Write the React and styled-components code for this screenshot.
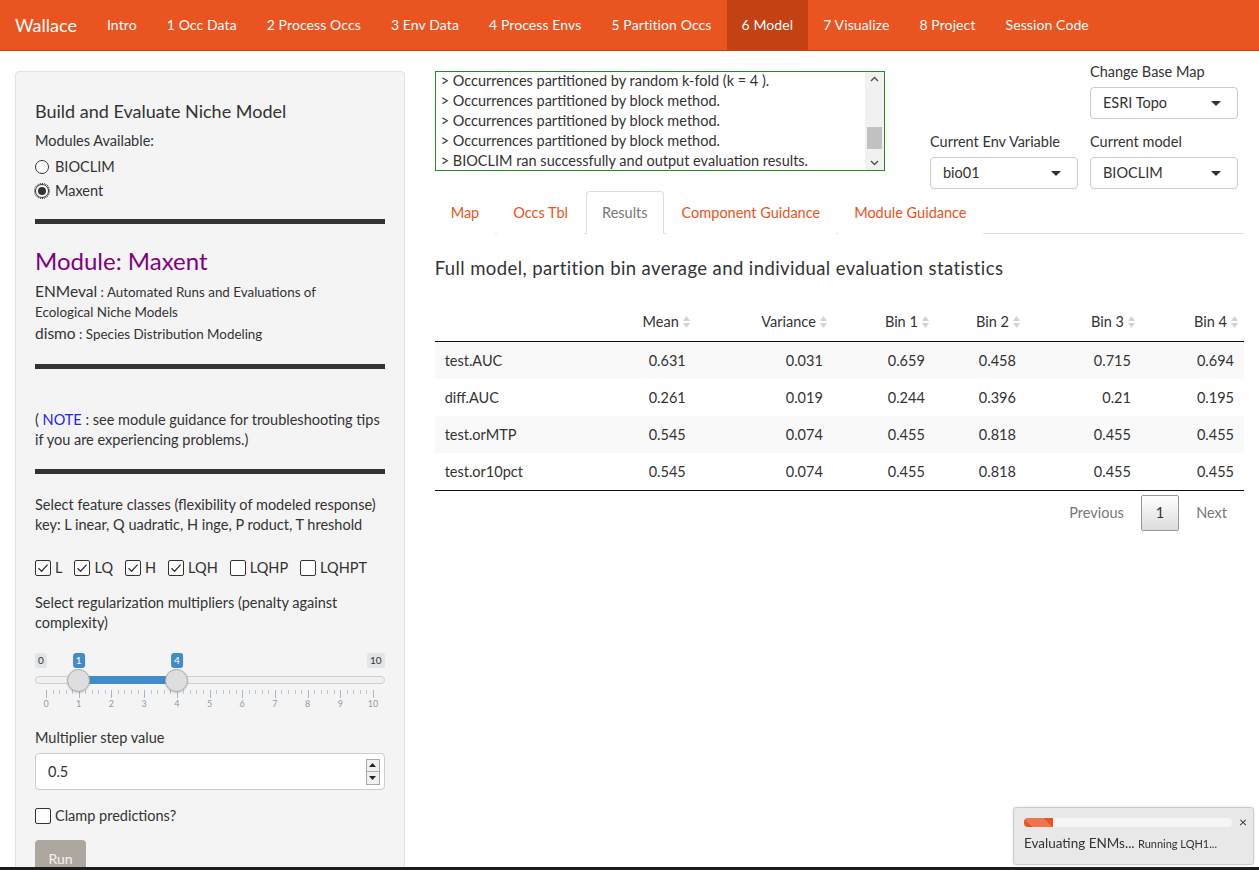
import React from "react";
import styled, { createGlobalStyle } from "styled-components";

const Global = createGlobalStyle`
  html, body { margin: 0; padding: 0; background: #fff; overflow: hidden; }
  body {
    font-family: Lato, "Open Sans", sans-serif;
    font-size: 14.5px;
    line-height: 20px;
    color: #333;
  }
  * { box-sizing: border-box; }
`;

/* ---------- navbar ---------- */
const NavBar = styled.nav`
  display: flex;
  height: 51px;
  background: #e95420;
  border-bottom: 1px solid #c34113;
  padding-left: 15px;
`;
const Brand = styled.div`
  display: flex;
  align-items: center;
  font-size: 18px;
  color: #fff;
  padding-right: 15px;
`;
const NavItem = styled.div`
  display: flex;
  align-items: center;
  padding: 0 15px;
  color: #fff;
  font-size: 14px;
  letter-spacing: 0.1px;
  background: ${(p) => (p.$active ? "#c34113" : "transparent")};
`;

/* ---------- page layout ---------- */
const Page = styled.div`
  display: grid;
  grid-template-columns: 389.67px 1fr;
  column-gap: 30px;
  padding: 11px 15px 0;
`;

/* ---------- sidebar ---------- */
const Well = styled.div`
  margin-top: 9px;
  background: #f4f4f4;
  border: 1px solid #e3e3e3;
  border-radius: 4px;
  padding: 19px 19px 40px;
  min-height: 820px;
`;
const H4 = styled.h4`
  font-size: 18px;
  font-weight: 400;
  line-height: 20px;
  margin: 10px 0 10px;
  color: #333;
`;
const Label = styled.div`
  margin-top: ${(p) => p.$mt || 0}px;
  line-height: 20px;
`;
const RadioRow = styled.div`
  display: flex;
  align-items: center;
  gap: 6px;
  margin-top: ${(p) => p.$mt || 0}px;
  height: 20px;
`;
const RadioDot = styled.span`
  width: 14px;
  height: 14px;
  border-radius: 50%;
  border: 1px solid #333;
  background: #fff;
  display: inline-flex;
  align-items: center;
  justify-content: center;
  outline: ${(p) => (p.$on ? "1px dotted #222" : "none")};
  outline-offset: 0px;
  &::after {
    content: "";
    width: 8px;
    height: 8px;
    border-radius: 50%;
    background: ${(p) => (p.$on ? "#333" : "transparent")};
  }
`;
const Rule = styled.div`
  height: 5px;
  background: #333;
  margin-top: ${(p) => p.$mt || 0}px;
`;
const ModuleTitle = styled.div`
  color: #800080;
  font-size: 24px;
  line-height: 26px;
  margin-top: 24px;
`;
const PkgLine = styled.div`
  font-size: 13.4px;
  line-height: ${(p) => p.$lh || 20}px;
  margin-top: ${(p) => p.$mt || 0}px;
`;
const Pkg = styled.span`
  font-size: 15.5px;
`;
const Note = styled.span`
  color: #2222ee;
`;
const CheckRow = styled.div`
  display: flex;
  align-items: center;
  gap: 12px;
  margin-top: ${(p) => p.$mt || 0}px;
  height: 20px;
`;
const CheckItem = styled.label`
  display: inline-flex;
  align-items: center;
  gap: 4px;
`;
const Box = styled.span`
  width: 16px;
  height: 16px;
  border: 1px solid #333;
  border-radius: 2px;
  background: #fff;
  display: inline-flex;
  align-items: center;
  justify-content: center;
`;

const Check = ({ on, children }) => (
  <CheckItem>
    <Box>
      {on && (
        <svg width="12" height="12" viewBox="0 0 12 12">
          <path d="M1.5 6.2 L4.6 9.2 L10.6 2.6" fill="none" stroke="#333" strokeWidth="1.3" />
        </svg>
      )}
    </Box>
    {children}
  </CheckItem>
);

/* slider */
const SliderWrap = styled.div`
  position: relative;
  height: 62px;
  margin-top: 18px;
`;
const Track = styled.div`
  position: absolute;
  left: 0;
  right: 0;
  top: 25px;
  height: 8px;
  border-radius: 4px;
  background: #f0f0f0;
  border: 1px solid #cfcfcf;
`;
const Fill = styled.div`
  position: absolute;
  top: 25px;
  height: 8px;
  background: #428bca;
`;
const Thumb = styled.div`
  position: absolute;
  top: 18px;
  width: 23px;
  height: 23px;
  margin-left: -11.5px;
  border-radius: 50%;
  background: #dedede;
  border: 1px solid #ababab;
  box-shadow: 0 1px 2px rgba(0, 0, 0, 0.15);
`;
const ValTag = styled.div`
  position: absolute;
  top: 2px;
  height: 15px;
  padding: 0 3px;
  font-size: 10px;
  line-height: 15px;
  border-radius: 3px;
  transform: translateX(-50%);
  background: ${(p) => (p.$blue ? "#428bca" : "#e1e4e9")};
  color: ${(p) => (p.$blue ? "#fff" : "#333")};
`;
const EdgeTag = styled(ValTag)`
  transform: none;
`;
const Tick = styled.div`
  position: absolute;
  top: 39px;
  width: 1px;
  height: ${(p) => (p.$major ? 8 : 4)}px;
  background: ${(p) => (p.$major ? "#9eb8d3" : "#b7c7d8")};
`;
const TickLabel = styled.div`
  position: absolute;
  top: 48px;
  font-size: 9px;
  line-height: 10px;
  color: #999;
  transform: translateX(-50%);
`;

const Slider = () => {
  const x0 = 11;
  const step = 32.7;
  const pos = (v) => x0 + v * step;
  const ticks = [];
  for (let i = 0; i <= 50; i++) {
    const major = i % 5 === 0;
    ticks.push(<Tick key={i} $major={major} style={{ left: x0 + (i * step) / 5 }} />);
  }
  return (
    <SliderWrap>
      <EdgeTag style={{ left: 0 }}>0</EdgeTag>
      <EdgeTag style={{ right: 0 }}>10</EdgeTag>
      <ValTag $blue style={{ left: pos(1) }}>1</ValTag>
      <ValTag $blue style={{ left: pos(4) }}>4</ValTag>
      <Track />
      <Fill style={{ left: pos(1), width: pos(4) - pos(1) }} />
      {ticks}
      {Array.from({ length: 11 }, (_, i) => (
        <TickLabel key={i} style={{ left: pos(i) }}>
          {i}
        </TickLabel>
      ))}
      <Thumb style={{ left: pos(1) }} />
      <Thumb style={{ left: pos(4) }} />
    </SliderWrap>
  );
};

const NumInput = styled.div`
  margin-top: 5px;
  height: 37px;
  border: 1px solid #ccc;
  border-radius: 4px;
  background: #fff;
  display: flex;
  align-items: center;
  justify-content: space-between;
  padding: 0 4px 0 12px;
`;
const Spinner = styled.div`
  display: flex;
  flex-direction: column;
  width: 14px;
  height: 26px;
  border: 1px solid #a9a9a9;
  background: #f0f0f0;
  & > span {
    flex: 1;
    display: flex;
    align-items: center;
    justify-content: center;
  }
  & > span + span {
    border-top: 1px solid #a9a9a9;
  }
`;
const RunBtn = styled.div`
  margin-top: 14px;
  width: 51px;
  height: 38px;
  border-radius: 4px;
  background: #aea79f;
  color: #f7f2ec;
  display: flex;
  align-items: center;
  justify-content: center;
  font-size: 14px;
`;

/* ---------- main ---------- */
const Main = styled.div`
  display: flex;
  flex-direction: column;
`;
const TopRow = styled.div`
  display: flex;
  justify-content: space-between;
  align-items: flex-start;
  padding-right: 6px;
`;
const LogBox = styled.div`
  margin-top: 9px;
  width: 450px;
  height: 100px;
  border: 1px solid #228b22;
  display: flex;
  overflow: hidden;
`;
const LogText = styled.div`
  flex: 1;
  padding-left: 5px;
  line-height: 20px;
  margin-top: -1px;
  white-space: nowrap;
  overflow: hidden;
`;
const FakeScroll = styled.div`
  width: 19px;
  background: #f1f1f1;
  display: flex;
  flex-direction: column;
  align-items: center;
  justify-content: space-between;
  padding: 4px 0;
  position: relative;
`;
const ScrollThumb = styled.div`
  position: absolute;
  left: 2px;
  right: 2px;
  top: 55px;
  height: 22px;
  background: #c1c1c1;
`;
const SelGrid = styled.div`
  display: grid;
  grid-template-columns: 148px 148px;
  column-gap: 12px;
  row-gap: 13px;
`;
const SelCell = styled.div`
  grid-column: ${(p) => p.$col};
`;
const SelLabel = styled.div`
  line-height: 20px;
  margin-bottom: 5px;
`;
const SelectBox = styled.div`
  height: 32px;
  border: 1px solid #ccc;
  border-radius: 4px;
  background: #fff;
  display: flex;
  align-items: center;
  justify-content: space-between;
  padding: 0 16px 0 12px;
  &::after {
    content: "";
    border-left: 5px solid transparent;
    border-right: 5px solid transparent;
    border-top: 5px solid #333;
  }
`;

const Tabs = styled.div`
  display: flex;
  margin-top: 2px;
  border-bottom: 1px solid #ddd;
`;
const Tab = styled.div`
  padding: 11px 15px 10px;
  line-height: 20px;
  margin-right: 2px;
  margin-bottom: -1px;
  color: ${(p) => (p.$active ? "#777" : "#e95420")};
  border: 1px solid ${(p) => (p.$active ? "#ddd" : "transparent")};
  border-bottom-color: ${(p) => (p.$active ? "#fff" : "transparent")};
  border-radius: 4px 4px 0 0;
  background: #fff;
`;
const H4Main = styled.h4`
  font-size: 18.5px;
  letter-spacing: 0.4px;
  font-weight: 400;
  line-height: 20px;
  margin: 24px 0 0;
  color: #333;
`;
const Table = styled.table`
  margin-top: 25px;
  width: 100%;
  border-collapse: collapse;
  table-layout: fixed;
  border-bottom: 1px solid #111;
`;
const Th = styled.th`
  font-weight: 400;
  padding: 9px 6px 9px 10px;
  line-height: 20px;
  border-bottom: 1px solid #111;
  text-align: right;
`;
const ThInner = styled.span`
  display: inline-flex;
  align-items: center;
  gap: 4px;
`;
const Tr = styled.tr`
  background: ${(p) => (p.$odd ? "#f9f9f9" : "#fff")};
  & + & td {
    border-top: 1px solid #ddd;
  }
`;
const Td = styled.td`
  padding: 9px 10px 8px;
  line-height: 20px;
  text-align: ${(p) => (p.$left ? "left" : "right")};
`;
const Pager = styled.div`
  display: flex;
  justify-content: flex-end;
  margin-top: 4px;
  padding-right: 2px;
`;
const PageBtn = styled.div`
  padding: 7px 14px;
  margin-left: 2px;
  line-height: 20px;
  border: 1px solid ${(p) => (p.$current ? "#979797" : "transparent")};
  border-radius: 2px;
  color: ${(p) => (p.$current ? "#333" : "#777")};
  background: ${(p) => (p.$current ? "linear-gradient(#fff, #dcdcdc)" : "transparent")};
`;

const SortIcon = () => (
  <svg width="7" height="12" viewBox="0 0 7 12">
    <path d="M3.5 0 L7 5 L0 5 Z" fill="#d4d4d4" />
    <path d="M3.5 12 L7 7 L0 7 Z" fill="#d4d4d4" />
  </svg>
);

/* ---------- notification ---------- */
const Notice = styled.div`
  position: fixed;
  right: 5px;
  bottom: 5px;
  width: 241px;
  background: #e8e8e8;
  border: 1px solid #ccc;
  border-radius: 3px;
  padding: 10px;
  box-shadow: 0 0 3px rgba(0, 0, 0, 0.1);
`;
const ProgressTrack = styled.div`
  width: calc(100% - 11px);
  height: 9px;
  border-radius: 4px;
  background: #f5f5f5;
  overflow: hidden;
`;
const ProgressFill = styled.div`
  height: 100%;
  background-color: #e95420;
  background-image: linear-gradient(
    45deg,
    rgba(255, 255, 255, 0.2) 25%,
    transparent 25%,
    transparent 50%,
    rgba(255, 255, 255, 0.2) 50%,
    rgba(255, 255, 255, 0.2) 75%,
    transparent 75%,
    transparent
  );
  background-size: 40px 40px;
`;
const Close = styled.div`
  position: absolute;
  top: 4px;
  right: 6px;
  font-size: 14px;
  color: #333;
`;
const NoticeText = styled.div`
  margin-top: 6px;
  font-size: 13.5px;
  line-height: 20px;
  white-space: nowrap;
`;
const Small = styled.span`
  font-size: 11px;
`;
const BottomEdge = styled.div`
  position: fixed;
  left: 0;
  right: 0;
  bottom: 0;
  height: 3px;
  background: #1c1c1c;
`;

const navItems = [
  "Intro",
  "1 Occ Data",
  "2 Process Occs",
  "3 Env Data",
  "4 Process Envs",
  "5 Partition Occs",
  "6 Model",
  "7 Visualize",
  "8 Project",
  "Session Code",
];

const rows = [
  ["test.AUC", "0.631", "0.031", "0.659", "0.458", "0.715", "0.694"],
  ["diff.AUC", "0.261", "0.019", "0.244", "0.396", "0.21", "0.195"],
  ["test.orMTP", "0.545", "0.074", "0.455", "0.818", "0.455", "0.455"],
  ["test.or10pct", "0.545", "0.074", "0.455", "0.818", "0.455", "0.455"],
];
const headers = ["Mean", "Variance", "Bin 1", "Bin 2", "Bin 3", "Bin 4"];
const colWidths = [160, 101, 137, 102, 91, 115, 103];

const Chevron = ({ up }) => (
  <svg width="9" height="6" viewBox="0 0 9 6">
    <path d={up ? "M1 5 L4.5 1.5 L8 5" : "M1 1 L4.5 4.5 L8 1"} fill="none" stroke="#505050" strokeWidth="1.4" />
  </svg>
);

export default function App() {
  return (
    <>
      <Global />
      <NavBar>
        <Brand>Wallace</Brand>
        {navItems.map((n) => (
          <NavItem key={n} $active={n === "6 Model"}>
            {n}
          </NavItem>
        ))}
      </NavBar>
      <Page>
        <Well>
          <H4>Build and Evaluate Niche Model</H4>
          <Label>Modules Available:</Label>
          <RadioRow $mt={6}>
            <RadioDot />
            BIOCLIM
          </RadioRow>
          <RadioRow $mt={4}>
            <RadioDot $on />
            Maxent
          </RadioRow>
          <Rule $mt={18} />
          <ModuleTitle>Module: Maxent</ModuleTitle>
          <PkgLine $mt={7}>
            <Pkg>ENMeval</Pkg> : Automated Runs and Evaluations of
          </PkgLine>
          <PkgLine>Ecological Niche Models</PkgLine>
          <PkgLine $lh={22}>
            <Pkg>dismo</Pkg> : Species Distribution Modeling
          </PkgLine>
          <Rule $mt={19} />
          <Label $mt={41}>
            ( <Note>NOTE</Note> : see module guidance for troubleshooting tips if you are
            experiencing problems.)
          </Label>
          <Rule $mt={19} />
          <Label $mt={21}>
            Select feature classes (flexibility of modeled response) key: L inear, Q uadratic, H
            inge, P roduct, T hreshold
          </Label>
          <CheckRow $mt={23}>
            <Check on>L</Check>
            <Check on>LQ</Check>
            <Check on>H</Check>
            <Check on>LQH</Check>
            <Check>LQHP</Check>
            <Check>LQHPT</Check>
          </CheckRow>
          <Label $mt={15}>Select regularization multipliers (penalty against complexity)</Label>
          <Slider />
          <Label $mt={15}>Multiplier step value</Label>
          <NumInput>
            0.5
            <Spinner>
              <span>
                <svg width="7" height="4" viewBox="0 0 7 4">
                  <path d="M3.5 0 L7 4 L0 4 Z" fill="#222" />
                </svg>
              </span>
              <span>
                <svg width="7" height="4" viewBox="0 0 7 4">
                  <path d="M3.5 4 L7 0 L0 0 Z" fill="#222" />
                </svg>
              </span>
            </Spinner>
          </NumInput>
          <CheckRow $mt={16}>
            <Check>Clamp predictions?</Check>
          </CheckRow>
          <RunBtn>Run</RunBtn>
        </Well>

        <Main>
          <TopRow>
            <LogBox>
              <LogText>
                <div>&gt; Occurrences partitioned by random k-fold (k = 4 ).</div>
                <div>&gt; Occurrences partitioned by block method.</div>
                <div>&gt; Occurrences partitioned by block method.</div>
                <div>&gt; Occurrences partitioned by block method.</div>
                <div>&gt; BIOCLIM ran successfully and output evaluation results.</div>
              </LogText>
              <FakeScroll>
                <Chevron up />
                <ScrollThumb />
                <Chevron />
              </FakeScroll>
            </LogBox>
            <SelGrid>
              <SelCell $col={2}>
                <SelLabel>Change Base Map</SelLabel>
                <SelectBox>ESRI Topo</SelectBox>
              </SelCell>
              <SelCell $col={1}>
                <SelLabel>Current Env Variable</SelLabel>
                <SelectBox>bio01</SelectBox>
              </SelCell>
              <SelCell $col={2}>
                <SelLabel>Current model</SelLabel>
                <SelectBox>BIOCLIM</SelectBox>
              </SelCell>
            </SelGrid>
          </TopRow>
          <Tabs>
            <Tab>Map</Tab>
            <Tab>Occs Tbl</Tab>
            <Tab $active>Results</Tab>
            <Tab>Component Guidance</Tab>
            <Tab>Module Guidance</Tab>
          </Tabs>
          <H4Main>Full model, partition bin average and individual evaluation statistics</H4Main>
          <Table>
            <colgroup>
              {colWidths.map((w, i) => (
                <col key={i} style={{ width: w }} />
              ))}
            </colgroup>
            <thead>
              <tr>
                <Th />
                {headers.map((h) => (
                  <Th key={h}>
                    <ThInner>
                      {h}
                      <SortIcon />
                    </ThInner>
                  </Th>
                ))}
              </tr>
            </thead>
            <tbody>
              {rows.map((r, i) => (
                <Tr key={r[0]} $odd={i % 2 === 0}>
                  {r.map((c, j) => (
                    <Td key={j} $left={j === 0}>
                      {c}
                    </Td>
                  ))}
                </Tr>
              ))}
            </tbody>
          </Table>
          <Pager>
            <PageBtn>Previous</PageBtn>
            <PageBtn $current>1</PageBtn>
            <PageBtn>Next</PageBtn>
          </Pager>
        </Main>
      </Page>

      <Notice>
        <ProgressTrack>
          <ProgressFill style={{ width: "14%" }} />
        </ProgressTrack>
        <Close>×</Close>
        <NoticeText>
          Evaluating ENMs... <Small>Running LQH1...</Small>
        </NoticeText>
      </Notice>
      <BottomEdge />
    </>
  );
}
